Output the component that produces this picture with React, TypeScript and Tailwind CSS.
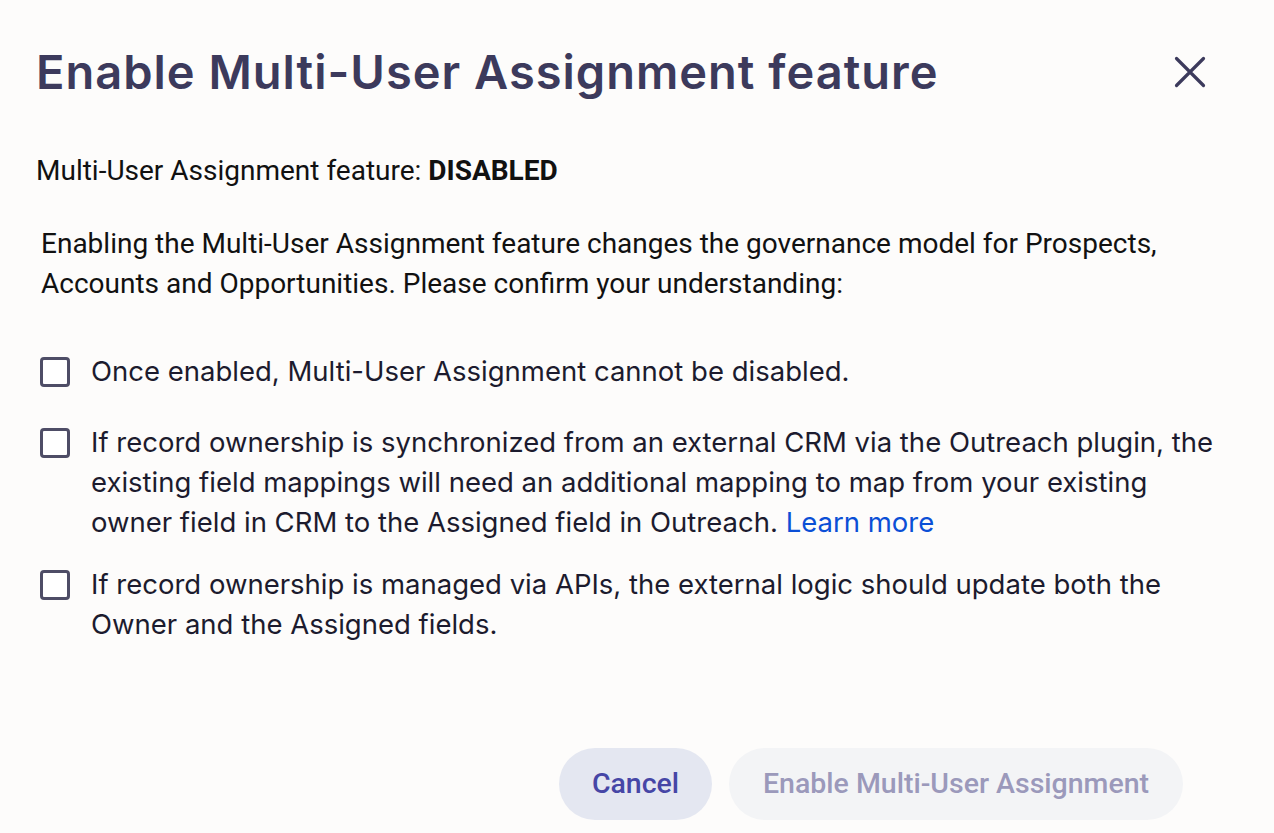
import { useState } from 'react';

const items = [
    { id: 1, text: 'Once enabled, Multi-User Assignment cannot be disabled.' },
    {
        id: 2,
        text: 'If record ownership is synchronized from an external CRM via the Outreach plugin, the existing field mappings will need an additional mapping to map from your existing owner field in CRM to the Assigned field in Outreach.',
        link: true,
    },
    {
        id: 3,
        text: 'If record ownership is managed via APIs, the external logic should update both the Owner and the Assigned fields.',
    },
];

export default function App() {
    const [checked, setChecked] = useState<Record<number, boolean>>({});
    const allChecked = items.every((i) => checked[i.id]);

    return (
        <div className="w-[1274px] h-[833px] bg-[#fdfcfb] overflow-hidden relative">
            {/* Header */}
            <div className="flex items-center justify-between pl-[36px] pr-[68px] pt-[44px]">
                <h1 className="text-[47px] leading-[56px] font-semibold text-[#3c3a5c] tracking-[1px] font-['Inter',sans-serif]">
                    Enable Multi-User Assignment feature
                </h1>
                <button className="text-[#3c3a5c]">
                    <svg width="32" height="32" viewBox="0 0 32 32" fill="none" stroke="currentColor" strokeWidth="3.2" strokeLinecap="round">
                        <path d="M2.5 2.5L29.5 29.5M29.5 2.5L2.5 29.5" />
                    </svg>
                </button>
            </div>

            <p className="mt-[54px] pl-[36px] text-[28px] leading-[34px] text-[#111] font-['Roboto',sans-serif]">
                Multi-User Assignment feature: <span className="font-bold">DISABLED</span>
            </p>

            <p className="mt-[36px] pl-[41px] pr-[100px] text-[28px] leading-[40px] text-[#111] font-['Roboto',sans-serif]">
                Enabling the Multi-User Assignment feature changes the governance model for Prospects, Accounts and Opportunities. Please confirm your understanding:
            </p>

            {/* Checkboxes */}
            <div className="mt-[47px] pl-[40px] pr-[40px] flex flex-col font-['Inter',sans-serif] text-[27.5px] leading-[40px] text-[#1c1b2e]">
                {items.map((item, idx) => (
                    <label
                        key={item.id}
                        className={`flex items-start gap-[21px] cursor-pointer ${idx === 1 ? 'mt-[31px]' : idx === 2 ? 'mt-[22px]' : ''}`}
                    >
                        <input
                            type="checkbox"
                            className="sr-only"
                            checked={!!checked[item.id]}
                            onChange={() => setChecked({ ...checked, [item.id]: !checked[item.id] })}
                        />
                        <span className="mt-[6px] shrink-0 w-[30px] h-[30px] rounded-[4px] border-[3px] border-[#4e4d66] bg-white" />
                        <span>
                            {item.text}
                            {item.link && <> <a className="text-[#0b4fd6]">Learn more</a></>}
                        </span>
                    </label>
                ))}
            </div>

            {/* Footer */}
            <div className="absolute left-0 right-0 top-[748px] flex justify-end gap-[17px] pr-[91px] font-['Roboto',sans-serif] text-[28.5px] font-medium">
                <button className="h-[72px] w-[153px] rounded-full bg-[#e4e7f1] text-[#4646a6]">Cancel</button>
                <button
                    disabled={!allChecked}
                    className="h-[72px] w-[454px] rounded-full bg-[#f3f4f6] text-[#9b99bb]"
                >
                    Enable Multi-User Assignment
                </button>
            </div>
        </div>
    );
}
